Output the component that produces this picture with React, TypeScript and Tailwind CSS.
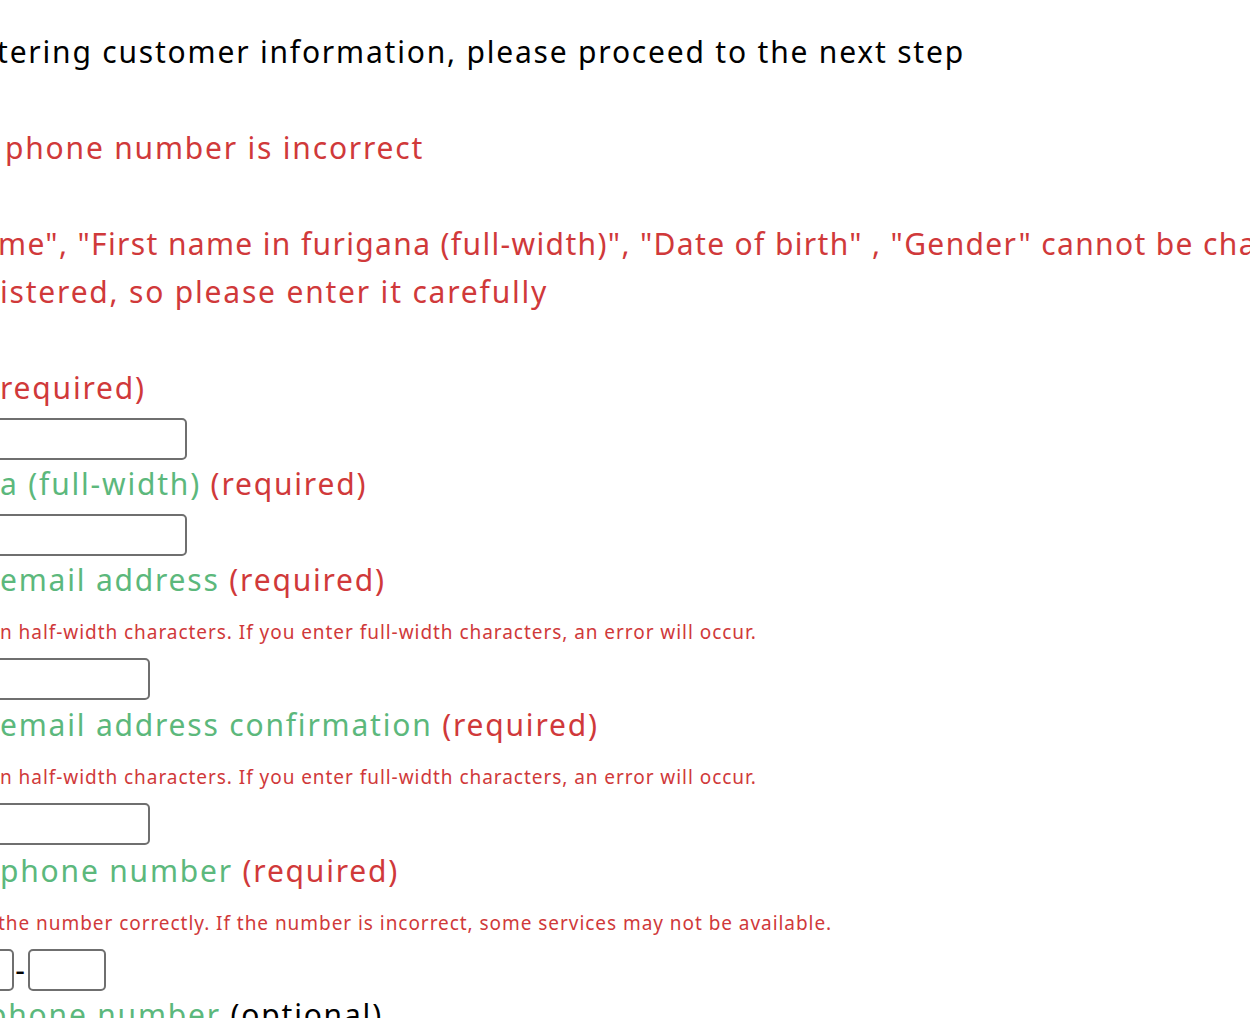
import React from "react";

const RED = "text-[#d0393a]";
const GREEN = "text-[#5cb87c]";
const SMALL = "h-12 pt-[8px] text-[19px] leading-[40px] tracking-[0.95px] ";

function Input({ className }: { className: string }) {
  return (
    <div
      className={
        "h-[42px] shrink-0 rounded-[5px] border-2 border-[#6f6f6f] bg-white " +
        className
      }
    />
  );
}

export default function App() {
  return (
    <div className="w-[1250px] h-[1018px] overflow-hidden bg-white font-['Noto_Sans',sans-serif] text-[30px] leading-[48px] tracking-[1.8px] whitespace-nowrap">
      <div className="pt-[28px]">
        <p className="-ml-[3px] text-black">
          tering customer information, please proceed to the next step
        </p>
        <p className={"mt-[48px] pl-[5px] " + RED}>phone number is incorrect</p>
        <p className={"mt-[48px] -ml-[2px] tracking-[1.35px] " + RED}>
          me", "First name in furigana (full-width)", "Date of birth" , "Gender"
          cannot be changed once
        </p>
        <p className={RED}>istered, so please enter it carefully</p>

        <p className={"mt-[48px] " + RED}>required)</p>
        <div className="h-12 pt-[6px]">
          <Input className="w-[300px] -ml-[113px]" />
        </div>

        <p>
          <span className={GREEN}>a (full-width)</span>{" "}
          <span className={RED}>(required)</span>
        </p>
        <div className="h-12 pt-[6px]">
          <Input className="w-[300px] -ml-[113px]" />
        </div>

        <p>
          <span className={GREEN}>email address</span>{" "}
          <span className={RED}>(required)</span>
        </p>
        <p className={SMALL + RED}>
          n half-width characters. If you enter full-width characters, an error
          will occur.
        </p>
        <div className="h-12 pt-[6px]">
          <Input className="w-[300px] -ml-[150px]" />
        </div>

        <p className="pt-[1px]">
          <span className={GREEN}>email address confirmation</span>{" "}
          <span className={RED}>(required)</span>
        </p>
        <p className={SMALL + RED}>
          n half-width characters. If you enter full-width characters, an error
          will occur.
        </p>
        <div className="h-12 pt-[6px]">
          <Input className="w-[300px] -ml-[150px]" />
        </div>

        <p className="pt-[2px]">
          <span className={GREEN}>phone number</span>{" "}
          <span className={RED}>(required)</span>
        </p>
        <p className={"-ml-[2px] " + SMALL + RED}>
          the number correctly. If the number is incorrect, some services may
          not be available.
        </p>
        <div className="flex h-12 items-center pt-[6px]">
          <Input className="w-[60px] -ml-[46px]" />
          <span className="w-[14px] text-center text-black">-</span>
          <Input className="w-[78px]" />
        </div>

        <p className="-ml-[12px]">
          <span className={GREEN}>phone number</span>{" "}
          <span className="text-black">(optional)</span>
        </p>
      </div>
    </div>
  );
}
